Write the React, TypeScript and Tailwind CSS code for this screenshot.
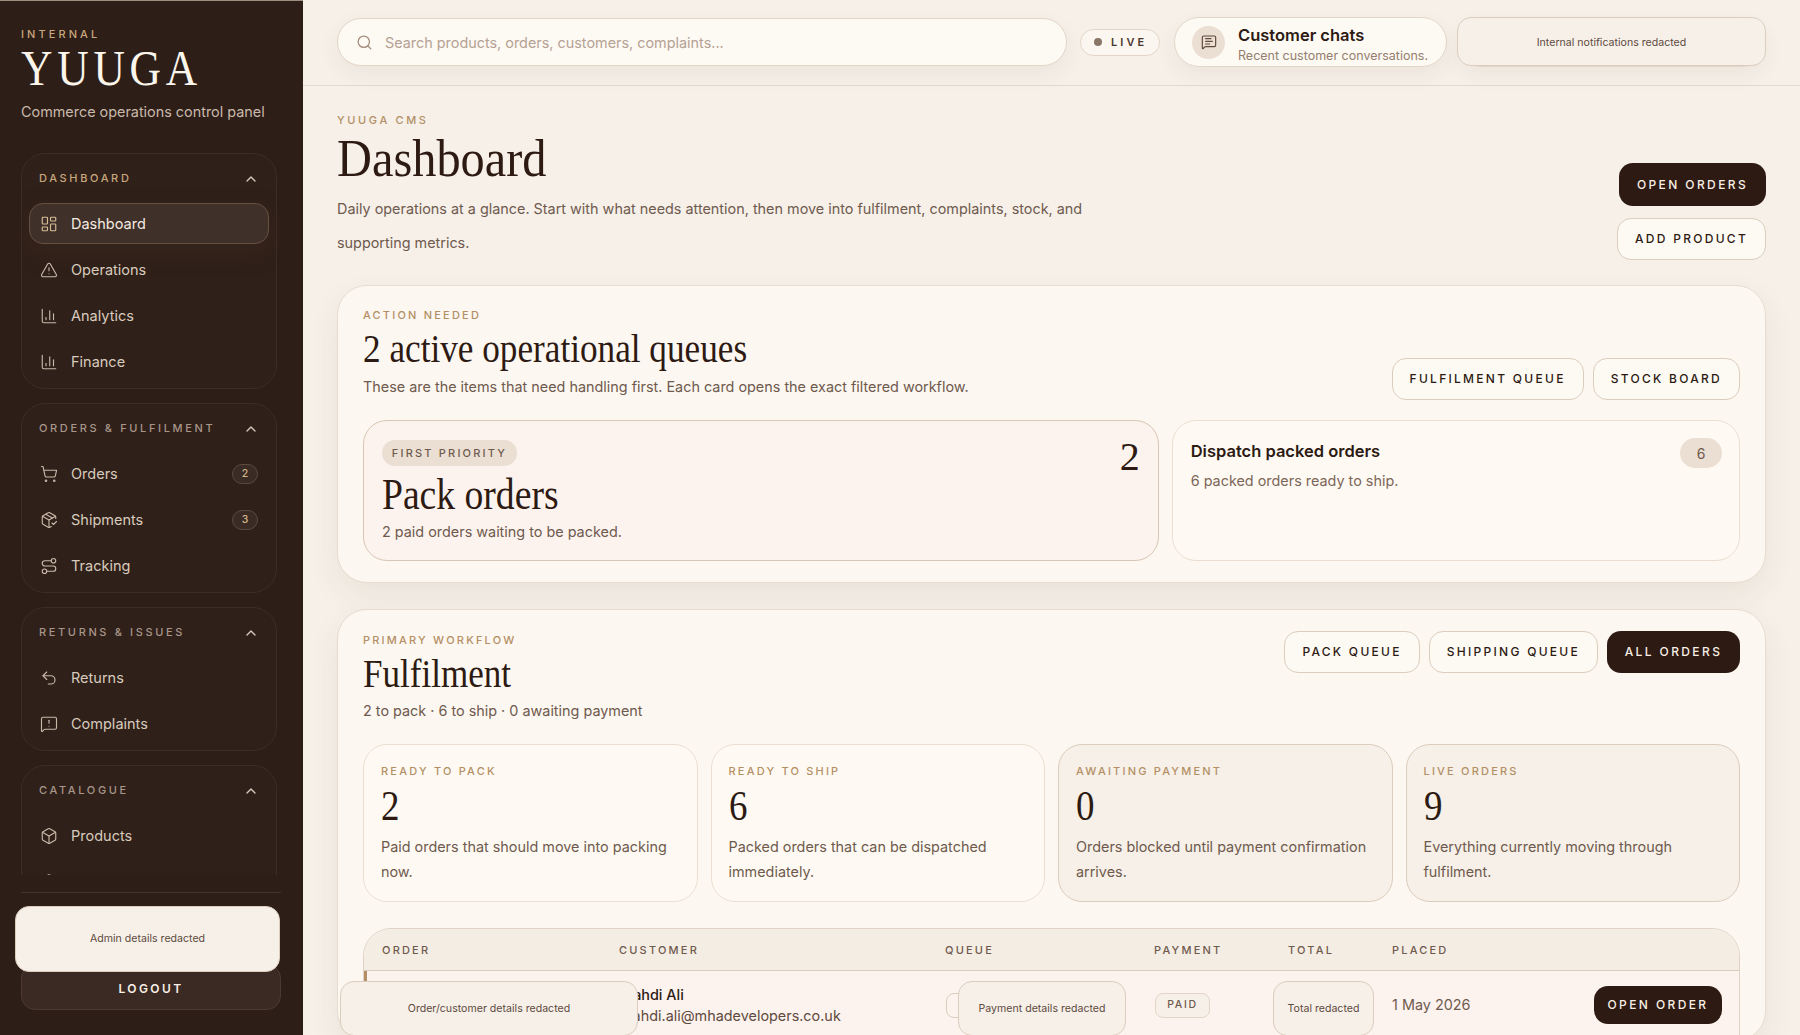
import {
  ChartColumn,
  ChevronUp,
  Box,
  Boxes,
  LayoutDashboard,
  MessageSquareText,
  MessageSquareWarning,
  PackageCheck,
  Route,
  Search,
  ShoppingCart,
  TriangleAlert,
  Undo2,
} from "lucide-react";
import type { ComponentType } from "react";

type NavItem = {
  label: string;
  icon: ComponentType<{ className?: string; strokeWidth?: number }>;
  badge?: number;
  active?: boolean;
};

const navGroups: { title: string; highlight?: boolean; items: NavItem[] }[] = [
  {
    title: "DASHBOARD",
    highlight: true,
    items: [
      { label: "Dashboard", icon: LayoutDashboard, active: true },
      { label: "Operations", icon: TriangleAlert },
      { label: "Analytics", icon: ChartColumn },
      { label: "Finance", icon: ChartColumn },
    ],
  },
  {
    title: "ORDERS & FULFILMENT",
    items: [
      { label: "Orders", icon: ShoppingCart, badge: 2 },
      { label: "Shipments", icon: PackageCheck, badge: 3 },
      { label: "Tracking", icon: Route },
    ],
  },
  {
    title: "RETURNS & ISSUES",
    items: [
      { label: "Returns", icon: Undo2 },
      { label: "Complaints", icon: MessageSquareWarning },
    ],
  },
  {
    title: "CATALOGUE",
    items: [
      { label: "Products", icon: Box },
      // cut off by the scroll area, only the top of the icon shows
      { label: "", icon: Boxes },
    ],
  },
];

const stats = [
  { label: "READY TO PACK", value: "2", text: "Paid orders that should move into packing now.", muted: false },
  { label: "READY TO SHIP", value: "6", text: "Packed orders that can be dispatched immediately.", muted: false },
  { label: "AWAITING PAYMENT", value: "0", text: "Orders blocked until payment confirmation arrives.", muted: true },
  { label: "LIVE ORDERS", value: "9", text: "Everything currently moving through fulfilment.", muted: true },
];

const columns = ["ORDER", "CUSTOMER", "QUEUE", "PAYMENT", "TOTAL", "PLACED"];

function Eyebrow({ children }: { children: string }) {
  return <div className="text-[11px] leading-[14px] font-medium tracking-[0.2em] text-[#b48f65]">{children}</div>;
}

function OutlineButton({ children }: { children: string }) {
  return (
    <button className="flex h-[42px] items-center rounded-[14px] border border-[#dccdbd] bg-[#fdf9f3] px-[17px] text-[12px] font-medium tracking-[0.19em] whitespace-nowrap text-[#2d1a12]">
      {children}
    </button>
  );
}

function DarkButton({ children, className }: { children: string; className: string }) {
  return (
    <button
      className={`flex items-center justify-center rounded-[14px] bg-[#2d1a12] text-[12px] font-medium tracking-[0.2em] whitespace-nowrap text-[#f8f0e6] ${className}`}
    >
      {children}
    </button>
  );
}

function Redacted({ children, className }: { children: string; className: string }) {
  return (
    <div
      className={`absolute flex items-center justify-center border border-[#dccdbd] bg-[#f6f0e9] text-[10.6px] text-[#5e4a3e] ${className}`}
    >
      {children}
    </div>
  );
}

function Sidebar() {
  return (
    <aside className="relative flex h-[1035px] w-[303px] shrink-0 flex-col border-t border-[#a08e80] bg-[#2d1e18] pr-[22px] pl-[21px]">
      <div className="pt-[26px] text-[11px] leading-[14px] font-medium tracking-[0.28em] text-[#c9a77d]">INTERNAL</div>
      <div className="mt-[2px] origin-left scale-x-[0.87] font-['Liberation_Serif',serif] text-[50px] leading-[50px] tracking-[5.5px] text-[#fbf5ec]">
        YUUGA
      </div>
      <div className="mt-[9px] text-[14.4px] leading-[20px] whitespace-nowrap text-[#c9b9aa]">
        Commerce operations control panel
      </div>

      <div className="mt-[31px] flex flex-1 flex-col gap-[14px] overflow-hidden pr-[4px]">
        {navGroups.map((group) => (
          <section
            key={group.title}
            className="shrink-0 rounded-[24px] border border-[#3d2d25] bg-[#2f2019] px-[7px] pb-[6px]"
          >
            <div className="flex h-[49px] items-center justify-between pr-[10px] pl-[10px]">
              <span
                className={`text-[11px] font-medium tracking-[0.24em] ${group.highlight ? "text-[#c9a77d]" : "text-[#a8968a]"}`}
              >
                {group.title}
              </span>
              <ChevronUp className="h-[16px] w-[16px] text-[#d8cbbd]" strokeWidth={2} />
            </div>
            <div className="flex flex-col gap-[5px]">
              {group.items.map((item, i) => {
                const Icon = item.icon;
                return (
                  <div
                    key={i}
                    className={`flex h-[41px] items-center rounded-[14px] border pr-[10px] pl-[10px] text-[14.5px] ${
                      item.active
                        ? "border-[#66503f] bg-[#3f3029] text-[#f5ebe0] shadow-[0_8px_20px_rgba(60,40,30,0.6)]"
                        : "border-transparent text-[#d8cbbd]"
                    }`}
                  >
                    <Icon
                      className={`h-[18px] w-[18px] shrink-0 ${item.active ? "text-[#d8bd98]" : "text-[#c9b9aa]"}`}
                      strokeWidth={1.5}
                    />
                    <span className="ml-[13px] flex-1">{item.label}</span>
                    {item.badge !== undefined && (
                      <span className="flex h-[20px] w-[26px] items-center justify-center rounded-full border border-[#5a4a3f] bg-[#3a2b24] text-[10.5px] font-medium text-[#d4b48a]">
                        {item.badge}
                      </span>
                    )}
                  </div>
                );
              })}
            </div>
          </section>
        ))}
      </div>

      <div className="mt-[17px] border-t border-[#43332a] pt-[71px] pb-[25px]">
        <button className="h-[46px] w-full rounded-[14px] border border-[#4c3a30] bg-[#3a2a23] pt-[3px] text-[12px] font-semibold tracking-[0.2em] text-[#f8f0e6]">
          LOGOUT
        </button>
      </div>
      <Redacted className="top-[905px] left-[15px] h-[66px] w-[265px] rounded-[14px]">Admin details redacted</Redacted>
    </aside>
  );
}

function TopBar() {
  return (
    <header className="flex h-[86px] shrink-0 items-center border-b border-[#e6d9cc] px-[34px] pb-[1px]">
      <div className="flex h-[48px] w-[730px] items-center rounded-[24px] border border-[#e3d6c8] bg-[#fdf9f3] pl-[18px] shadow-[0_8px_22px_rgba(80,50,20,0.06)]">
        <Search className="h-[17px] w-[17px] text-[#a08a79]" strokeWidth={1.75} />
        <span className="ml-[12px] pt-[2px] text-[14.4px] text-[#b5a294]">
          Search products, orders, customers, complaints...
        </span>
      </div>
      <div className="ml-[13px] flex h-[27px] w-[80px] items-center rounded-full border border-[#e3d6c8] bg-[#fbf6ef] pl-[13px]">
        <span className="h-[8px] w-[8px] rounded-full bg-[#8a7668]" />
        <span className="ml-[9px] text-[11px] font-semibold tracking-[0.28em] text-[#4a382e]">LIVE</span>
      </div>
      <div className="ml-[14px] flex h-[50px] w-[273px] items-center rounded-[25px] border border-[#e3d6c8] bg-[#fdf9f3] pl-[17px] shadow-[0_8px_22px_rgba(80,50,20,0.06)]">
        <span className="flex h-[33px] w-[33px] items-center justify-center rounded-full bg-[#ebdfd3]">
          <MessageSquareText className="h-[16px] w-[16px] text-[#5e4a3e]" strokeWidth={1.75} />
        </span>
        <div className="mt-[5px] ml-[13px]">
          <div className="text-[16.5px] leading-[20px] font-semibold text-[#2d1a12]">Customer chats</div>
          <div className="mt-[2px] text-[12.5px] leading-[17px] text-[#947e6f]">Recent customer conversations.</div>
        </div>
      </div>
      <div className="relative ml-[10px] h-[50px] w-[309px] rounded-[24px] border border-[#e3d6c8] bg-[#fdf9f3] shadow-[0_8px_22px_rgba(80,50,20,0.06)]">
        <Redacted className="top-[-1px] left-[-1px] h-[49px] w-[309px] rounded-[14px] pt-[2px]">
          Internal notifications redacted
        </Redacted>
      </div>
    </header>
  );
}

function ActionCard() {
  return (
    <section className="mt-[25px] rounded-[30px] border border-[#e7dccf] bg-[#fcf7f1] px-[25px] pt-[22px] pb-[21px] shadow-[0_12px_32px_rgba(80,50,20,0.07)]">
      <div className="flex items-end justify-between">
        <div>
          <Eyebrow>ACTION NEEDED</Eyebrow>
          <h2 className="mt-[5px] origin-left scale-x-[0.88] font-['Liberation_Serif',serif] text-[40px] leading-[44px] font-normal whitespace-nowrap text-[#2d1a12]">
            2 active operational queues
          </h2>
          <p className="mt-[5px] text-[14.4px] leading-[22px] text-[#6f5a4e]">
            These are the items that need handling first. Each card opens the exact filtered workflow.
          </p>
        </div>
        <div className="mb-[-2px] flex gap-[9px]">
          <OutlineButton>FULFILMENT QUEUE</OutlineButton>
          <OutlineButton>STOCK BOARD</OutlineButton>
        </div>
      </div>
      <div className="mt-[22px] grid grid-cols-[1.4fr_1fr] gap-[13px]">
        <div className="flex justify-between rounded-[24px] border border-[#d9c6b4] bg-[#fdf3ee] pt-[19px] pr-[18px] pb-[17px] pl-[18px]">
          <div>
            <span className="flex h-[26px] w-[135px] items-center justify-center rounded-full bg-[#ebdfd3] text-[11px] font-medium tracking-[0.2em] whitespace-nowrap text-[#6f5a4e]">
              FIRST PRIORITY
            </span>
            <div className="mt-[5px] origin-left scale-x-[0.855] font-['Liberation_Serif',serif] text-[44px] leading-[48px] whitespace-nowrap text-[#2d1a12]">
              Pack orders
            </div>
            <p className="mt-[2px] text-[14.4px] leading-[22px] text-[#6f5a4e]">2 paid orders waiting to be packed.</p>
          </div>
          <div className="-mt-[5px] font-['Liberation_Serif',serif] text-[40px] leading-[44px] text-[#2d1a12]">2</div>
        </div>
        <div className="flex items-start justify-between rounded-[24px] border border-[#ebdfd3] bg-[#fefaf3] pt-[18px] pr-[17px] pl-[18px]">
          <div>
            <div className="text-[16.5px] leading-[24px] font-semibold text-[#2d1a12]">Dispatch packed orders</div>
            <p className="mt-[7px] text-[14.4px] leading-[22px] text-[#7d6759]">6 packed orders ready to ship.</p>
          </div>
          <span className="-mt-[1px] flex h-[30px] w-[42px] items-center justify-center rounded-full bg-[#ebdfd3] text-[14px] text-[#6f5a4e]">
            6
          </span>
        </div>
      </div>
    </section>
  );
}

function FulfilmentCard() {
  return (
    <section className="mt-[26px] shrink-0 rounded-[30px] border border-[#e7dccf] bg-[#fcf7f1] px-[25px] pt-[23px] shadow-[0_12px_32px_rgba(80,50,20,0.07)]">
      <div className="flex items-start justify-between">
        <div>
          <Eyebrow>PRIMARY WORKFLOW</Eyebrow>
          <h2 className="mt-[5px] origin-left scale-x-[0.876] font-['Liberation_Serif',serif] text-[40px] leading-[44px] font-normal text-[#2d1a12]">
            Fulfilment
          </h2>
          <p className="mt-[4px] text-[14.4px] leading-[22px] text-[#6f5a4e]">2 to pack · 6 to ship · 0 awaiting payment</p>
        </div>
        <div className="-mt-[2px] flex gap-[9px]">
          <OutlineButton>PACK QUEUE</OutlineButton>
          <OutlineButton>SHIPPING QUEUE</OutlineButton>
          <DarkButton className="h-[42px] w-[133px]">ALL ORDERS</DarkButton>
        </div>
      </div>

      <div className="mt-[22px] grid grid-cols-4 gap-[13px]">
        {stats.map((stat) => (
          <div
            key={stat.label}
            className={`rounded-[24px] border pt-[19px] pr-[18px] pb-[17px] pl-[17px] ${
              stat.muted ? "border-[#dccdbd] bg-[#f6f0e8]" : "border-[#ebdfd3] bg-[#fefaf3]"
            }`}
          >
            <Eyebrow>{stat.label}</Eyebrow>
            <div className="mt-[5px] origin-left scale-x-[0.88] font-['Liberation_Serif',serif] text-[42px] leading-[46px] text-[#2d1a12]">
              {stat.value}
            </div>
            <p className="mt-[5px] text-[14.4px] leading-[25px] text-[#6f5a4e]">{stat.text}</p>
          </div>
        ))}
      </div>

      <div className="mt-[26px] rounded-t-[28px] border border-[#e0d3c5]">
        <div className="grid h-[42px] grid-cols-[237px_326px_209px_134px_104px_1fr] items-center rounded-t-[28px] border-b border-[#dccdbd] bg-[#f4ede4] pt-[1px]">
          {columns.map((col) => (
            <span key={col} className="pl-[18px] text-[11px] font-medium tracking-[0.2em] text-[#6f5a4e]">
              {col}
            </span>
          ))}
        </div>
        <div className="relative grid h-[68px] grid-cols-[237px_326px_209px_134px_104px_1fr] items-center bg-[#fdf3ee] shadow-[inset_3px_0_0_#b48f65]">
          <div />
          <div className="pl-[19px]">
            <div className="text-[14.4px] leading-[20px] font-medium text-[#2d1a12]">Mahdi Ali</div>
            <div className="mt-[1px] text-[14.4px] leading-[20px] text-[#5e4a3e]">mahdi.ali@mhadevelopers.co.uk</div>
          </div>
          <div className="pl-[19px]">
            <div className="h-[25px] w-[70px] rounded-[8px] border border-[#dccdbd]" />
          </div>
          <div className="pl-[19px]">
            <span className="flex h-[25px] w-[55px] items-center justify-center rounded-[8px] border border-[#e3d6c8] bg-[#f6f0e8] text-[10.5px] font-medium tracking-[0.16em] text-[#6f5a4e]">
              PAID
            </span>
          </div>
          <div />
          <div className="flex items-center justify-between pr-[17px] pl-[18px]">
            <span className="text-[14.4px] text-[#6f5a4e]">1 May 2026</span>
            <DarkButton className="h-[38px] w-[128px]">OPEN ORDER</DarkButton>
          </div>
          <Redacted className="top-[10px] left-[-24px] h-[55px] w-[298px] rounded-[14px]">
            Order/customer details redacted
          </Redacted>
          <Redacted className="top-[10px] left-[594px] h-[55px] w-[168px] rounded-[14px]">Payment details redacted</Redacted>
          <Redacted className="top-[10px] left-[909px] h-[55px] w-[101px] rounded-[14px]">Total redacted</Redacted>
        </div>
      </div>
    </section>
  );
}

export default function App() {
  return (
    <div className="flex h-[1035px] w-[1800px] overflow-hidden bg-[#f6f0e9] font-['Inter',sans-serif]">
      <Sidebar />
      <main className="flex min-w-0 flex-1 flex-col overflow-hidden">
        <TopBar />
        <div className="px-[34px] pt-[27px]">
          <div className="flex items-end justify-between">
            <div>
              <div className="text-[11px] leading-[14px] font-medium tracking-[0.24em] text-[#b48f65]">YUUGA CMS</div>
              <h1 className="mt-[4px] origin-left scale-x-[0.93] font-['Liberation_Serif',serif] text-[52px] leading-[56px] font-normal text-[#2d1a12]">
                Dashboard
              </h1>
              <p className="mt-[5px] max-w-[760px] text-[14.4px] leading-[34px] text-[#6f5a4e]">
                Daily operations at a glance. Start with what needs attention, then move into fulfilment, complaints,
                stock, and supporting metrics.
              </p>
            </div>
            <div className="flex flex-col items-end gap-[12px]">
              <DarkButton className="h-[43px] w-[147px]">OPEN ORDERS</DarkButton>
              <OutlineButton>ADD PRODUCT</OutlineButton>
            </div>
          </div>
          <ActionCard />
          <FulfilmentCard />
        </div>
      </main>
    </div>
  );
}
